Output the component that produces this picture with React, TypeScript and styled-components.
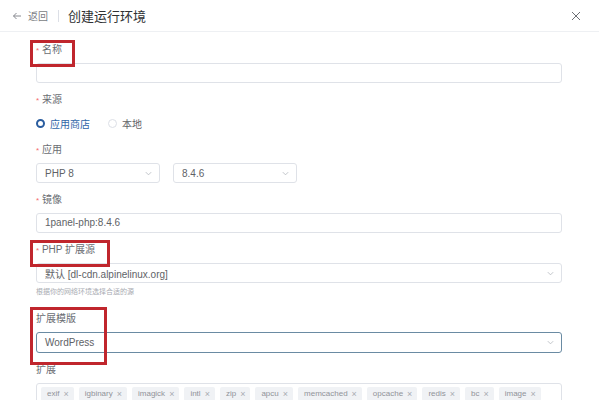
import { createGlobalStyle } from "styled-components";
import styled from "styled-components";

const GlobalStyle = createGlobalStyle`
  * { box-sizing: border-box; }
  body {
    margin: 0;
    background: #ffffff;
    font-family: "Liberation Sans", "Noto Sans CJK SC", sans-serif;
    color: #606266;
  }
`;

const tags = [
  "exif",
  "igbinary",
  "imagick",
  "intl",
  "zip",
  "apcu",
  "memcached",
  "opcache",
  "redis",
  "bc",
  "image",
];

const Chevron = () => (
  <svg width="9" height="9" viewBox="0 0 10 10">
    <path d="M2 3.5 L5 6.5 L8 3.5" fill="none" stroke="#b4b8bf" strokeWidth="0.9" />
  </svg>
);

const App = () => {
  return (
    <Page>
      <GlobalStyle />
      <Header>
        <BackLink>
          <svg width="10" height="10" viewBox="0 0 10 10">
            <path d="M9 5 H1.5 M4.5 2 L1.5 5 L4.5 8" fill="none" stroke="#7a7d83" strokeWidth="0.9" />
          </svg>
          <span>返回</span>
        </BackLink>
        <HeaderLine />
        <Title>创建运行环境</Title>
        <Close>
          <svg width="10" height="10" viewBox="0 0 10 10">
            <path d="M1 1 L9 9 M9 1 L1 9" fill="none" stroke="#6d7076" strokeWidth="1" />
          </svg>
        </Close>
      </Header>
      <Form>
        <Item>
          <Label>
            <Mark $w={39}>
              <Star>*</Star> 名称
            </Mark>
          </Label>
          <Input />
        </Item>
        <Item>
          <Label>
            <Star>*</Star> 来源
          </Label>
          <RadioRow>
            <Radio $on>
              <Dot $on />
              应用商店
            </Radio>
            <Radio>
              <Dot />
              本地
            </Radio>
          </RadioRow>
        </Item>
        <Item>
          <Label>
            <Star>*</Star> 应用
          </Label>
          <SelectRow>
            <Select $w={124}>
              <span>PHP 8</span>
              <Chevron />
            </Select>
            <Select $w={124}>
              <span>8.4.6</span>
              <Chevron />
            </Select>
          </SelectRow>
        </Item>
        <Item>
          <Label>
            <Star>*</Star> 镜像
          </Label>
          <Input>1panel-php:8.4.6</Input>
        </Item>
        <Item $tight>
          <Label>
            <Mark $w={74}>
              <Star>*</Star> PHP 扩展源
            </Mark>
          </Label>
          <Select>
            <span>默认 [dl-cdn.alpinelinux.org]</span>
            <Chevron />
          </Select>
          <Hint>根据你的网络环境选择合适的源</Hint>
        </Item>
        <Item>
          <Template>
            <Label>扩展模版</Label>
            <Select $active>
              <span>WordPress</span>
              <Chevron />
            </Select>
            <BigMark />
          </Template>
        </Item>
        <Item>
          <Label>扩展</Label>
          <TagBox>
            {tags.map((t) => (
              <Tag key={t}>
                {t}
                <TagX>×</TagX>
              </Tag>
            ))}
          </TagBox>
        </Item>
      </Form>
    </Page>
  );
};

export default App;

const Page = styled.div`
  width: 599px;
  height: 400px;
  overflow: hidden;
  background: #ffffff;
`;
const Header = styled.div`
  height: 32px;
  display: flex;
  align-items: center;
  padding: 0 12px 0 12px;
  border-bottom: 1px solid #eef0f3;
`;
const BackLink = styled.div`
  display: flex;
  align-items: center;
  gap: 6px;
  font-size: 10px;
  color: #7a7d83;
`;
const HeaderLine = styled.div`
  width: 1px;
  height: 12px;
  background: #dcdfe6;
  margin: 0 9px 0 10px;
`;
const Title = styled.div`
  font-size: 13px;
  color: #303133;
  flex: 1;
`;
const Close = styled.div`
  width: 12px;
  display: flex;
  justify-content: center;
  margin-right: 5px;
`;
const Form = styled.div`
  padding: 8px 37px 0 36px;
`;
const Item = styled.div<{ $tight?: boolean }>`
  display: flex;
  flex-direction: column;
  margin-bottom: ${(p) => (p.$tight ? "11px" : "7px")};
`;
const Label = styled.div`
  height: 20px;
  line-height: 20px;
  font-size: 10px;
  color: #6a6d73;
  margin-bottom: 3px;
`;
const Star = styled.span`
  color: #f56c6c;
  font-size: 8px;
`;
const Mark = styled.span<{ $w: number }>`
  position: relative;
  display: inline-block;
  height: 20px;
  line-height: 20px;
  &::after {
    content: "";
    position: absolute;
    left: -6px;
    top: 0px;
    width: ${(p) => p.$w}px;
    height: 21px;
    border: 3px solid #c0262d;
  }
`;
const Input = styled.div`
  height: 20px;
  border: 1px solid #dfe2e8;
  border-radius: 3px;
  font-size: 10px;
  color: #606266;
  line-height: 18px;
  padding: 0 8px;
`;
const RadioRow = styled.div`
  height: 20px;
  display: flex;
  align-items: center;
  gap: 18px;
`;
const Radio = styled.div<{ $on?: boolean }>`
  display: flex;
  align-items: center;
  gap: 5px;
  font-size: 10px;
  color: ${(p) => (p.$on ? "#2f66a8" : "#606266")};
`;
const Dot = styled.span<{ $on?: boolean }>`
  width: 9px;
  height: 9px;
  border-radius: 50%;
  border: ${(p) => (p.$on ? "2.5px solid #2a5d9f" : "1px solid #dcdfe6")};
  background: #ffffff;
`;
const SelectRow = styled.div`
  display: flex;
  gap: 13px;
`;
const Select = styled.div<{ $w?: number; $active?: boolean }>`
  width: ${(p) => (p.$w ? `${p.$w}px` : "100%")};
  height: ${(p) => (p.$active ? "21px" : "20px")};
  border: 1px solid ${(p) => (p.$active ? "#6a8ba3" : "#dfe2e8")};
  border-radius: 3px;
  display: flex;
  align-items: center;
  justify-content: space-between;
  padding: 0 6px 0 8px;
  font-size: 10px;
  color: #606266;
`;
const Hint = styled.div`
  font-size: 7px;
  color: #a8abb2;
  line-height: 12px;
  margin-top: 3px;
`;
const Template = styled.div`
  position: relative;
  display: flex;
  flex-direction: column;
`;
const BigMark = styled.div`
  position: absolute;
  left: -6px;
  top: -2px;
  width: 77px;
  height: 58px;
  border: 3px solid #c0262d;
  pointer-events: none;
`;
const TagBox = styled.div`
  border: 1px solid #dfe2e8;
  border-radius: 3px;
  padding: 3px 5px 3px 4px;
  display: flex;
  flex-wrap: wrap;
  gap: 5px;
  height: 40px;
`;
const Tag = styled.span`
  height: 14px;
  background: #f0f2f5;
  border-radius: 2px;
  padding: 0 5px 0 6px;
  font-size: 8px;
  line-height: 14px;
  color: #909399;
  display: inline-flex;
  align-items: center;
  gap: 4px;
`;
const TagX = styled.span`
  font-size: 9px;
  color: #a8abb2;
`;
